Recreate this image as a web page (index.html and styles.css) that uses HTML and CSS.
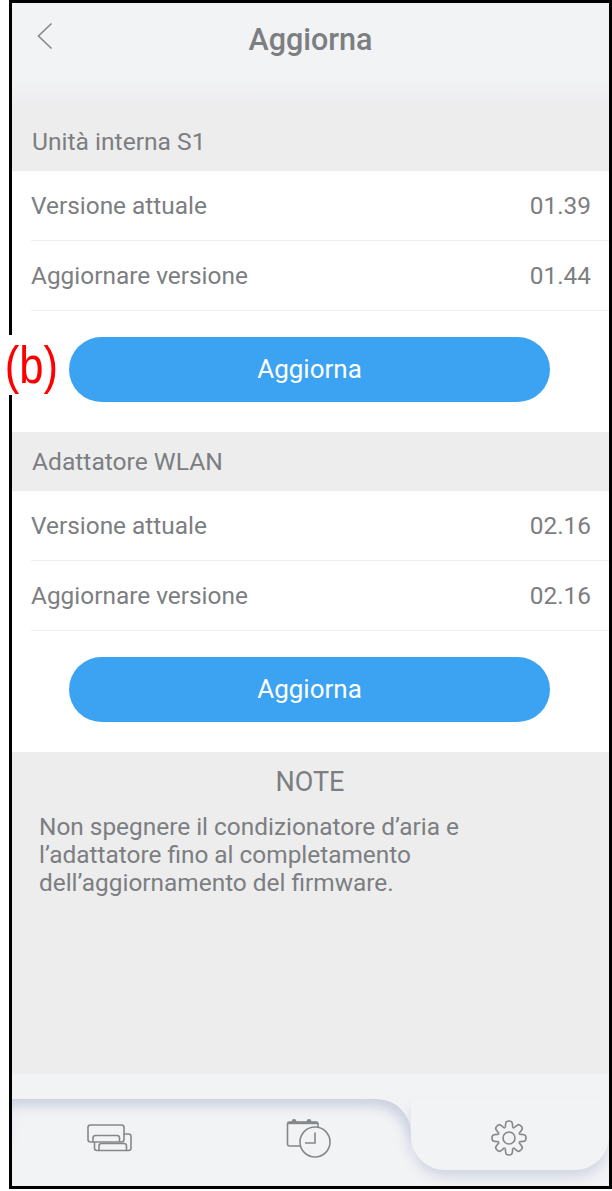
FILE: index.html
```html
<!DOCTYPE html>
<html lang="en">
<head>
    <meta charset="UTF-8">
    <title>Aggiorna</title>
    <link rel="stylesheet" href="styles.css">
</head>
<body>
    <div class="phone">
        <header class="topbar">
            <svg class="back" width="18" height="28" viewBox="0 0 18 28"><path d="M15.5 1.5 L2.5 14 L15.5 26.5" fill="none" stroke="#85888b" stroke-width="1.6"/></svg>
            <h1>Aggiorna</h1>
        </header>

        <div class="section-title first">Unità interna S1</div>
        <section class="panel">
            <div class="row"><span>Versione attuale</span><span>01.39</span></div>
            <div class="row"><span>Aggiornare versione</span><span>01.44</span></div>
            <div class="btn-wrap"><button class="btn">Aggiorna</button></div>
        </section>

        <div class="section-title">Adattatore WLAN</div>
        <section class="panel">
            <div class="row"><span>Versione attuale</span><span>02.16</span></div>
            <div class="row"><span>Aggiornare versione</span><span>02.16</span></div>
            <div class="btn-wrap"><button class="btn">Aggiorna</button></div>
        </section>

        <section class="note">
            <h2>NOTE</h2>
            <p>Non spegnere il condizionatore d’aria e<br>l’adattatore fino al completamento<br>dell’aggiornamento del firmware.</p>
        </section>

        <nav class="tabs">
            <div class="tab-back">
                <div class="tab">
                    <svg class="icon-units" width="46" height="28" viewBox="0 0 46 28" fill="none" stroke="#85888b" stroke-width="1.6">
                        <rect x="1" y="1" width="36" height="17" rx="2.5"/>
                        <path d="M6 18 V14 a2.5 2.5 0 0 1 2.5 -2.5 H30 a2.5 2.5 0 0 1 2.5 2.5 V18"/>
                        <path d="M37 10 H41.5 a2.5 2.5 0 0 1 2.5 2.5 V24 a2.5 2.5 0 0 1 -2.5 2.5 H10 a2.5 2.5 0 0 1 -2.5 -2.5 V18"/>
                        <path d="M12 26 V22 a2.5 2.5 0 0 1 2.5 -2.5 H37 a2.5 2.5 0 0 1 2.5 2.5 V26"/>
                    </svg>
                </div>
                <div class="tab">
                    <svg class="icon-timer" width="46" height="40" viewBox="0 0 46 40" fill="none" stroke="#85888b" stroke-width="1.6">
                        <path d="M16 28 H3.5 a2 2 0 0 1 -2 -2 V6 a2 2 0 0 1 2 -2 H30 a2 2 0 0 1 2 2 V10"/>
                        <path d="M1.5 5 H32" stroke-width="2.4"/>
                        <circle cx="8" cy="3.5" r="2.4" fill="#85888b" stroke="none"/>
                        <circle cx="23" cy="3.5" r="2.4" fill="#85888b" stroke="none"/>
                        <circle cx="29" cy="24" r="15" fill="#f2f3f5"/>
                        <path d="M29 14.5 V25 H19"/>
                    </svg>
                </div>
            </div>
            <div class="tab tab-active">
                <svg width="38" height="36" viewBox="-18 -18 36 36" fill="none" stroke="#85888b" stroke-width="1.6" stroke-linejoin="round">
                    <defs>
                        <path id="tooth" d="M-4.2 -10.2 Q-3.4 -10.8 -3.6 -12.4 L-3.2 -15 Q-3 -17 0 -17 Q3 -17 3.2 -15 L3.6 -12.4 Q3.4 -10.8 4.2 -10.2"/>
                    </defs>
                    <circle r="6"/>
                    <use href="#tooth"/>
                    <use href="#tooth" transform="rotate(45)"/>
                    <use href="#tooth" transform="rotate(90)"/>
                    <use href="#tooth" transform="rotate(135)"/>
                    <use href="#tooth" transform="rotate(180)"/>
                    <use href="#tooth" transform="rotate(225)"/>
                    <use href="#tooth" transform="rotate(270)"/>
                    <use href="#tooth" transform="rotate(315)"/>
                </svg>
            </div>
        </nav>
    </div>

    <div class="callout"><span class="callout-text">(b)</span></div>
</body>
</html>
```

FILE: styles.css
```css
html, body {
    margin: 0;
    padding: 0;
}
body {
    position: relative;
    background-color: #fff;
    font-family: Roboto, "Noto Sans", sans-serif;
    height: 1191px;
    overflow: hidden;
}
.phone {
    box-sizing: border-box;
    width: 603px;
    height: 1189px;
    margin-left: 9px;
    border: 3px solid #000;
    background-color: #ededee;
    display: flex;
    flex-direction: column;
    color: #7c7e81;
}
.topbar {
    position: relative;
    height: 105px;
    background: linear-gradient(#f2f3f5 0, #f2f3f5 72px, #ededee 100%);
    flex: none;
}
.topbar h1 {
    margin: 0;
    padding-top: 19px;
    text-align: center;
    font-size: 30.5px;
    line-height: 36px;
    font-weight: 500;
}
.back {
    position: absolute;
    left: 24px;
    top: 19px;
}
.section-title {
    height: 59px;
    box-sizing: border-box;
    padding: 0 0 0 20px;
    display: flex;
    align-items: center;
    font-size: 24.6px;
    background-color: #ededee;
}
.section-title.first {
    height: 63px;
    padding-top: 3px;
}
.panel {
    background-color: #fff;
    padding-left: 19px;
    flex: none;
}
.row {
    height: 70px;
    box-sizing: border-box;
    padding-right: 18px;
    border-bottom: 1px solid #eeeeef;
    display: flex;
    justify-content: space-between;
    align-items: center;
    font-size: 24.4px;
}
.btn-wrap {
    height: 121px;
    box-sizing: border-box;
    padding: 26px 0 0 38px;
}
.btn {
    display: block;
    width: 481px;
    height: 65px;
    padding: 0 0 2px;
    border: none;
    border-radius: 33px;
    background-color: #3ca3f3;
    color: #fff;
    font-family: inherit;
    font-size: 26px;
}
.note {
    flex: 1;
    padding-top: 14px;
}
.note h2 {
    margin: 0;
    text-align: center;
    font-size: 27px;
    line-height: 32px;
    font-weight: 400;
    margin-left: -1px;
}
.note p {
    margin: 15px 0 0 27px;
    font-size: 24.4px;
    line-height: 28px;
}
.tabs {
    flex: none;
    height: 112px;
    box-sizing: border-box;
    padding-top: 25px;
    background-color: #f2f3f5;
    display: flex;
    overflow: hidden;
}
.tab-back {
    position: relative;
    box-sizing: border-box;
    width: 399px;
    height: 87px;
    padding-right: 3px;
    display: flex;
}
/* the shadow of the raised bar fades out towards the bottom */
.tab-back::before {
    content: "";
    position: absolute;
    inset: 0;
    border-top-right-radius: 34px;
    box-shadow: inset 0 12px 14px -6px #cdd2e0, inset -10px 8px 14px -8px #cdd2e0;
    -webkit-mask-image: linear-gradient(#000 35%, transparent 70%);
    mask-image: linear-gradient(#000 35%, transparent 70%);
}
.tab {
    position: relative;
    flex: 1;
    display: flex;
    justify-content: center;
    align-items: flex-start;
}
.icon-units {
    margin: 25px 3px 0 0;
}
.icon-timer {
    margin-top: 19px;
}
.tab-active {
    flex: none;
    width: 198px;
    height: 71px;
    padding: 21px 2px 0 0;
    box-sizing: border-box;
    border-radius: 0 0 34px 34px;
    box-shadow: 0 8px 14px -2px #cdd2e0;
    background-color: #f2f3f5;
}
.callout {
    position: absolute;
    left: 0;
    top: 335px;
    width: 58px;
    height: 60px;
    background-color: #fff;
    color: #f00;
    font-family: "Liberation Sans", sans-serif;
    font-size: 52px;
    line-height: 60px;
    text-align: center;
}
.callout-text {
    display: block;
    transform: scaleX(0.84);
}
```
